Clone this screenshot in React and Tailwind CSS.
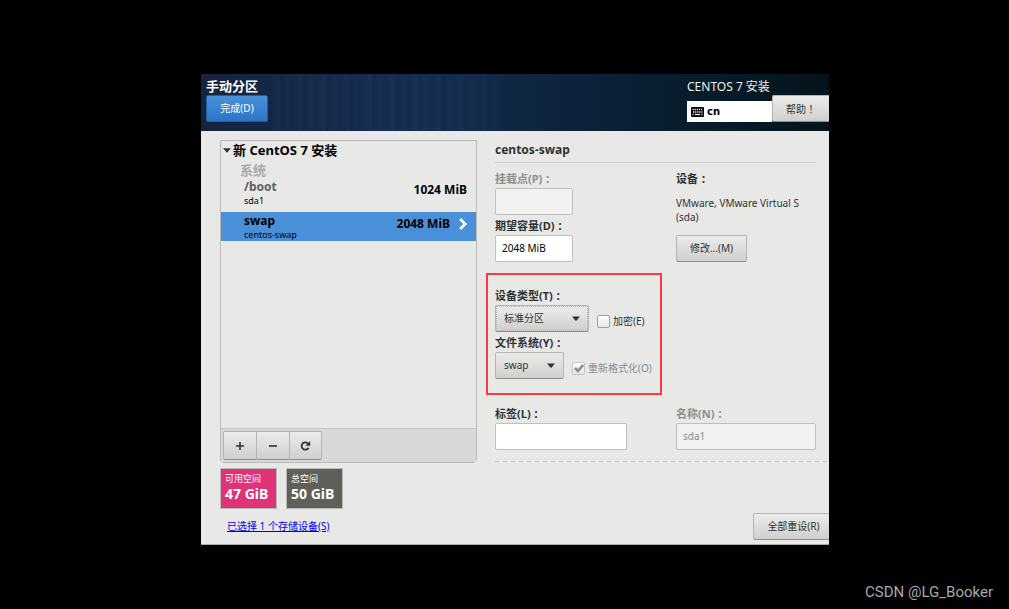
import { useState } from 'react';

const buttonStyle =
  'border border-[#b4b5b3] border-b-[#8f908e] bg-linear-to-b from-[#ececeb] to-[#cfcfcd] text-[#2e3436]';

// full-width punctuation, centred in its cell
function Mark({ children }) {
  return <span className="font-['Noto_Sans_CJK_TC',sans-serif]" lang="zh-TW">{children}</span>;
}

function Field({ id, label, muted, children }) {
  return (
    <div>
      <label
        htmlFor={id}
        className={`flex h-5 items-center pt-[2px] text-[11px] leading-[18px] font-bold whitespace-nowrap ${muted ? 'text-[#8b8e8f]' : 'text-[#2e3436]'}`}
      >
        {label}
        <Mark>：</Mark>
      </label>
      {children}
    </div>
  );
}

function TextInput({ className, ...props }) {
  return (
    <input
      type="text"
      className={`block h-[27px] rounded-xs border border-[#bfc0be] bg-white px-[6px] pb-[2px] text-[10px] text-black disabled:bg-[#f1f1f0] disabled:text-[#8b8e8f] ${className}`}
      {...props}
    />
  );
}

function Dropdown({ id, value, width, focused }) {
  return (
    <div className={`relative ${width}`}>
      <select
        id={id}
        defaultValue={value}
        className={`block h-[27px] w-full appearance-none rounded-xs pl-2 text-[10px] outline-none ${buttonStyle}`}
      >
        <option>{value}</option>
      </select>
      {focused && (
        <span className="pointer-events-none absolute inset-px border border-dotted border-[#b4b5b3]" />
      )}
      <svg viewBox="0 0 8 5" className="pointer-events-none absolute top-[11px] right-[9px] h-[5px] w-2">
        <path d="M0 0.5h8L4.6 4.6q-.6.5-1.2 0z" fill="#2e3436" />
      </svg>
    </div>
  );
}

function CheckField({ label, checked, disabled }) {
  const [on, setOn] = useState(Boolean(checked));

  return (
    <label className={`mt-[6px] flex items-center gap-[3px] text-[10px] whitespace-nowrap ${disabled ? 'text-[#8b8e8f]' : 'text-[#2e3436]'}`}>
      <span className="relative block size-[13px]">
        <input
          type="checkbox"
          checked={on}
          disabled={disabled}
          onChange={() => setOn(!on)}
          className="block size-[13px] appearance-none rounded-xs border border-[#a0a19f] bg-linear-to-b from-white to-[#e6e6e5] disabled:border-[#c4c5c3]"
        />
        {on && (
          <svg viewBox="0 0 13 13" className="pointer-events-none absolute inset-0 size-[13px]">
            <path d="M3 5.800l3 3.200 5.200-6.200" fill="none" stroke="#8b8e8f" strokeWidth="2.600" />
          </svg>
        )}
      </span>
      {label}
    </label>
  );
}

function Header() {
  return (
    <header className="relative flex h-[57px] justify-between bg-linear-to-r from-[#15233f] via-[#142c50] via-35% to-[#04141b]">
      {/* faint vertical streaks */}
      <div className="absolute inset-y-0 left-[70px] w-[230px] bg-[repeating-linear-gradient(90deg,#2a4a7a00_0px,#2a4a7a2e_7px,#0a183018_11px,#2a4a7a1c_16px,#2a4a7a00_23px)]" />
      <div className="relative pt-1 pl-[5px]">
        <h1 className="h-[17px] text-[13px] leading-[17px] font-bold text-white">手动分区</h1>
        <button
          type="button"
          className="block h-[27px] w-[62px] rounded-xs border border-[#1c5fa8] bg-linear-to-b from-[#4a90d9] to-[#2a76c6] text-[10px] text-white"
        >
          完成(D)
        </button>
      </div>
      <div className="relative w-[142px] pt-1">
        <div className="h-[17px] text-[12px] leading-[18px] text-[#eeeeec]">CENTOS 7 安装</div>
        <div className="flex items-end">
          <div className="flex h-[21px] flex-1 items-center gap-[3px] bg-white pl-[4px] font-['DejaVu_Sans','Noto_Sans_CJK_SC',sans-serif] text-[10px] font-bold text-black">
            <svg viewBox="0 0 13 10" className="h-[10px] w-[13px]">
              <rect width="13" height="10" rx="1" fill="#000" />
              <path
                d="M1.5 2.5h10M2 5h9.500M1.500 7.500h1M10.500 7.500h1"
                stroke="#fff"
                strokeWidth="1.3"
                strokeDasharray="1.200 0.900"
              />
              <path d="M4 7.500h5" stroke="#fff" strokeWidth="1.200" />
            </svg>
            cn
          </div>
          <button type="button" className={`h-[27px] w-[57px] rounded-l-xs border-r-0 text-[10px] ${buttonStyle}`}>
            帮助<Mark>！</Mark>
          </button>
        </div>
      </div>
    </header>
  );
}

function MountPoints() {
  return (
    <section className="flex h-[323px] flex-col rounded-b-sm border border-[#b9bab8]">
      <div className="flex-1">
        <h2 className="flex h-[18px] items-center gap-[2px] pl-[2px] text-[13px] leading-[16px] font-bold text-black">
          <svg viewBox="0 0 8 5" className="h-[5px] w-2">
            <path d="M0 0.300h8L4 4.700z" fill="#2e3436" />
          </svg>
          新 CentOS 7 安装
        </h2>
        <div className="flex h-5 items-center pt-[2px] pl-[19px] text-[13px] leading-[16px] font-bold text-[#a9aaa9]">系统</div>
        <div className="flex h-[33px] justify-between pr-[9px] pl-[23px]">
          <div>
            <div className="text-[12px] leading-[15px] font-bold text-[#5c5f60]">/boot</div>
            <div className="text-[9px] leading-[13px] text-black">sda1</div>
          </div>
          <div className="pt-[3px] text-[12px] leading-[16px] font-bold text-black">1024 MiB</div>
        </div>
        <div className="flex h-[29px] items-center bg-[#4a90d9] pr-[9px] pl-[23px] text-black">
          <div className="flex-1">
            <div className="text-[12px] leading-[15px] font-bold">swap</div>
            <div className="text-[9px] leading-[13px]">centos-swap</div>
          </div>
          <div className="pb-[6px] text-[12px] leading-[16px] font-bold">2048 MiB</div>
          <svg viewBox="0 0 8 12" className="mb-[5px] ml-[9px] h-3 w-2">
            <path d="M1.200 1l5 5-5 5" fill="none" stroke="#fff" strokeWidth="2.600" />
          </svg>
        </div>
      </div>
      <div className="flex h-[34px] items-center border-t border-[#c4c5c3] bg-[#d8d8d7] pl-[2px]">
        <button type="button" aria-label="添加" className={`flex h-[29px] w-[34px] items-center justify-center rounded-l-xs ${buttonStyle}`}>
          <svg viewBox="0 0 8 8" className="size-2">
            <path d="M4 0v8M0 4h8" stroke="#2e3436" strokeWidth="1.600" />
          </svg>
        </button>
        <button type="button" aria-label="删除" className={`flex h-[29px] w-[33px] items-center justify-center border-l-0 ${buttonStyle}`}>
          <svg viewBox="0 0 8 8" className="size-2">
            <path d="M0 4h8" stroke="#2e3436" strokeWidth="1.600" />
          </svg>
        </button>
        <button type="button" aria-label="刷新" className={`flex h-[29px] w-[32px] items-center justify-center rounded-r-xs border-l-0 ${buttonStyle}`}>
          <svg viewBox="0 0 11 10" className="h-[10px] w-[11px]">
            <path d="M8.200 2.600A3.700 3.700 0 1 0 8.600 6.800" fill="none" stroke="#2e3436" strokeWidth="1.800" />
            <path d="M10.200 0v4.800H5.400z" fill="#2e3436" />
          </svg>
        </button>
      </div>
    </section>
  );
}

function SpaceBox({ label, value, color }) {
  return (
    <div className={`h-[41px] w-[57px] border border-[#b9bab8] pt-1 pl-1 text-white ${color}`}>
      <div className="text-[9px] leading-[12px]">{label}</div>
      <div className="text-[14px] leading-[17px] font-bold whitespace-nowrap">{value}</div>
    </div>
  );
}

function Details() {
  return (
    <section className="min-w-0 flex-1">
      <h2 className="mr-[13px] flex h-[22px] items-center border-b border-[#cfd0ce] pb-1 text-[12px] font-bold text-[#2e3436]">
        centos-swap
      </h2>
      <div className="mt-[5px] mr-[13px] flex">
        <div className="w-[181px]">
          <Field id="mount" label="挂载点(P)" muted>
            <TextInput id="mount" disabled className="w-[78px]" />
          </Field>
          <Field id="capacity" label="期望容量(D)">
            <TextInput id="capacity" defaultValue="2048 MiB" className="w-[78px]" />
          </Field>
          <div className="mt-[11px] -ml-[9px] w-[176px] border-2 border-[#fb3b3b] pt-[10px] pb-[14px] pl-[7px]">
            <Field id="type" label="设备类型(T)">
              <div className="flex items-center gap-2">
                <Dropdown id="type" value="标准分区" width="w-[94px]" focused />
                <CheckField label="加密(E)" />
              </div>
            </Field>
            <Field id="fs" label="文件系统(Y)">
              <div className="flex items-center gap-2">
                <Dropdown id="fs" value="swap" width="w-[69px]" />
                <CheckField label="重新格式化(O)" checked disabled />
              </div>
            </Field>
          </div>
        </div>
        <div className="flex-1 text-[10px] text-[#2e3436]">
          <div className="flex h-5 items-center pt-[2px] text-[11px] leading-[18px] font-bold">
            设备<Mark>：</Mark>
          </div>
          <p className="mt-2 w-[140px] leading-[14px]">VMware, VMware Virtual S (sda)</p>
          <button type="button" className={`mt-[11px] block h-[27px] w-[71px] rounded-xs ${buttonStyle}`}>
            修改...(M)
          </button>
        </div>
      </div>
      <div className="mt-2 mr-[13px] flex">
        <div className="w-[181px]">
          <Field id="label" label="标签(L)">
            <TextInput id="label" className="w-[132px]" />
          </Field>
        </div>
        <div className="flex-1">
          <Field id="name" label="名称(N)" muted>
            <TextInput id="name" defaultValue="sda1" disabled className="w-full" />
          </Field>
        </div>
      </div>
      <div className="mt-[11px] h-px bg-[repeating-linear-gradient(90deg,#c6c7c5_0px,#c6c7c5_4px,transparent_4px,transparent_8px)]" />
    </section>
  );
}

export default function App() {
  return (
    <div className="flex min-h-screen flex-col bg-black font-['Noto_Sans','Noto_Sans_CJK_SC',sans-serif]">
      <main className="mt-[74px] mr-[180px] ml-[201px] overflow-hidden border-b border-[#a9aaa8] bg-[#e8e8e6]">
        <Header />
        <div className="flex gap-[18px] pt-[9px] pl-[19px]">
          <div className="w-[257px]">
            <MountPoints />
            <div className="mt-[5px] flex gap-[9px]">
              <SpaceBox label="可用空间" value="47 GiB" color="bg-[#df3277]" />
              <SpaceBox label="总空间" value="50 GiB" color="bg-[#5f6059]" />
            </div>
          </div>
          <div className="flex min-w-0 flex-1 pt-px">
            <Details />
          </div>
        </div>
        <footer className="mt-1 mb-1 flex items-center justify-between pl-[26px]">
          <a href="#" className="text-[10px] text-[#0000ee] underline">
            已选择 1 个存储设备(S)
          </a>
          <button type="button" className={`h-[27px] w-[76px] rounded-l-xs border-r-0 pl-1 text-[10px] ${buttonStyle}`}>
            全部重设(R)
          </button>
        </footer>
      </main>
      <div className="mt-auto pr-4 pb-2 text-right font-['Roboto',sans-serif] text-[15px] leading-[18px] text-[#a8a8a8]">
        CSDN @LG_Booker
      </div>
    </div>
  );
}
